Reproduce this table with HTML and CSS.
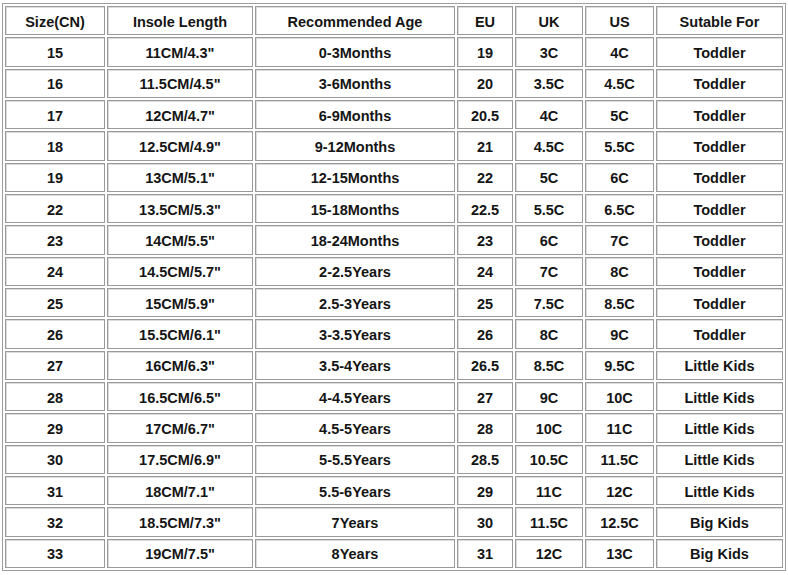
FILE: index.html
```html
<!DOCTYPE html>
<html>
<head>
<meta charset="utf-8">
<link rel="stylesheet" href="styles.css">
</head>
<body>
<table class="size-chart">
  <colgroup>
    <col class="c1"><col class="c2"><col class="c3"><col class="c4"><col class="c5"><col class="c6"><col class="c7">
  </colgroup>
  <thead>
    <tr><th>Size(CN)</th><th>Insole Length</th><th>Recommended Age</th><th>EU</th><th>UK</th><th>US</th><th>Sutable For</th></tr>
  </thead>
  <tbody>
    <tr><td>15</td><td>11CM/4.3"</td><td>0-3Months</td><td>19</td><td>3C</td><td>4C</td><td>Toddler</td></tr>
    <tr><td>16</td><td>11.5CM/4.5"</td><td>3-6Months</td><td>20</td><td>3.5C</td><td>4.5C</td><td>Toddler</td></tr>
    <tr><td>17</td><td>12CM/4.7"</td><td>6-9Months</td><td>20.5</td><td>4C</td><td>5C</td><td>Toddler</td></tr>
    <tr><td>18</td><td>12.5CM/4.9"</td><td>9-12Months</td><td>21</td><td>4.5C</td><td>5.5C</td><td>Toddler</td></tr>
    <tr><td>19</td><td>13CM/5.1"</td><td>12-15Months</td><td>22</td><td>5C</td><td>6C</td><td>Toddler</td></tr>
    <tr><td>22</td><td>13.5CM/5.3"</td><td>15-18Months</td><td>22.5</td><td>5.5C</td><td>6.5C</td><td>Toddler</td></tr>
    <tr><td>23</td><td>14CM/5.5"</td><td>18-24Months</td><td>23</td><td>6C</td><td>7C</td><td>Toddler</td></tr>
    <tr><td>24</td><td>14.5CM/5.7"</td><td>2-2.5Years</td><td>24</td><td>7C</td><td>8C</td><td>Toddler</td></tr>
    <tr><td>25</td><td>15CM/5.9"</td><td>2.5-3Years</td><td>25</td><td>7.5C</td><td>8.5C</td><td>Toddler</td></tr>
    <tr><td>26</td><td>15.5CM/6.1"</td><td>3-3.5Years</td><td>26</td><td>8C</td><td>9C</td><td>Toddler</td></tr>
    <tr><td>27</td><td>16CM/6.3"</td><td>3.5-4Years</td><td>26.5</td><td>8.5C</td><td>9.5C</td><td>Little Kids</td></tr>
    <tr><td>28</td><td>16.5CM/6.5"</td><td>4-4.5Years</td><td>27</td><td>9C</td><td>10C</td><td>Little Kids</td></tr>
    <tr><td>29</td><td>17CM/6.7"</td><td>4.5-5Years</td><td>28</td><td>10C</td><td>11C</td><td>Little Kids</td></tr>
    <tr><td>30</td><td>17.5CM/6.9"</td><td>5-5.5Years</td><td>28.5</td><td>10.5C</td><td>11.5C</td><td>Little Kids</td></tr>
    <tr><td>31</td><td>18CM/7.1"</td><td>5.5-6Years</td><td>29</td><td>11C</td><td>12C</td><td>Little Kids</td></tr>
    <tr><td>32</td><td>18.5CM/7.3"</td><td>7Years</td><td>30</td><td>11.5C</td><td>12.5C</td><td>Big Kids</td></tr>
    <tr><td>33</td><td>19CM/7.5"</td><td>8Years</td><td>31</td><td>12C</td><td>13C</td><td>Big Kids</td></tr>
  </tbody>
</table>
</body>
</html>
```

FILE: styles.css
```css
html, body {
  margin: 0;
  padding: 0;
  background: #ffffff;
}

body {
  padding: 3px 0 0 2px;
  font-family: "Liberation Sans", Arial, sans-serif;
}

.size-chart {
  border-collapse: separate;
  border-spacing: 2px;
  border: 1px solid #9c9c9c;
  table-layout: fixed;
  width: 784px;
}

.c1 { width: 100px; }
.c2 { width: 146px; }
.c3 { width: 200px; }
.c4 { width: 56px; }
.c5 { width: 68px; }
.c6 { width: 69px; }
.c7 { width: 127px; }

.size-chart th,
.size-chart td {
  box-sizing: border-box;
  height: 29.33px;
  padding: 2px 0 0;
  border: 1px solid #9a9a9a;
  box-shadow: inset 1px 1px 0 #dcdcdc;
  text-align: center;
  vertical-align: middle;
  font-size: 14.5px;
  font-weight: bold;
  color: #151515;
  white-space: nowrap;
}
```
